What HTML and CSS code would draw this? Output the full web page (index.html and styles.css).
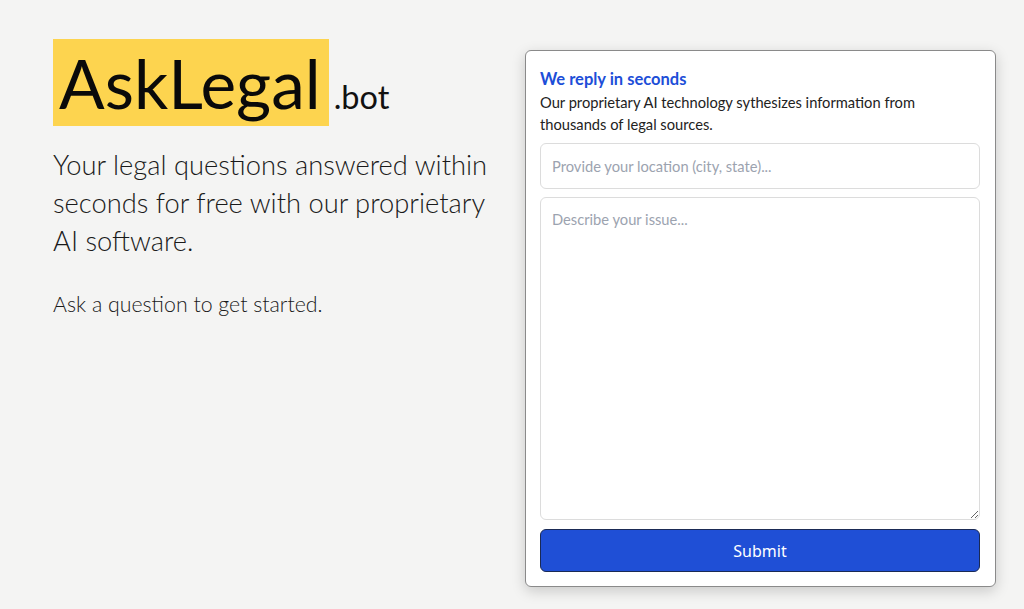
FILE: index.html
```html
<!DOCTYPE html>
<html lang="en">
<head>
<meta charset="utf-8">
<title>AskLegal.bot</title>
<link rel="stylesheet" href="styles.css">
</head>
<body>
<main class="page">
  <section class="intro">
    <div class="brand">
      <span class="brand-box">AskLegal</span><span class="brand-tld">.bot</span>
    </div>
    <p class="headline">Your legal questions answered within seconds for free with our proprietary AI software.</p>
    <p class="cta">Ask a question to get started.</p>
  </section>
  <form class="card">
    <h2 class="card-title">We reply in seconds</h2>
    <p class="card-desc">Our proprietary AI technology sythesizes information from thousands of legal sources.</p>
    <input class="field" type="text" placeholder="Provide your location (city, state)...">
    <textarea class="field area" placeholder="Describe your issue..."></textarea>
    <button class="submit" type="button">Submit</button>
  </form>
</main>
</body>
</html>
```

FILE: styles.css
```css
html, body {
  margin: 0;
  padding: 0;
  background: #f4f4f3;
  font-family: Lato, "Liberation Sans", sans-serif;
  color: #111;
}
.page {
  display: flex;
  align-items: flex-start;
  padding: 39px 28px 0 53px;
  height: 609px;
  box-sizing: border-box;
}
.intro {
  width: 450px;
}
.brand {
  display: flex;
  align-items: baseline;
}
.brand-box {
  background: #fdd44f;
  font-size: 67.5px;
  line-height: 87px;
  padding: 0 8px 0 6px;
  color: #0a0a0a;
}
.brand-tld {
  font-size: 32.5px;
  margin-left: 5px;
  color: #111;
}
.headline {
  margin: 20px 0 0;
  font-size: 27.3px;
  line-height: 38px;
  font-weight: 300;
  color: #1a1a1a;
}
.cta {
  margin: 30px 0 0;
  font-size: 21.3px;
  line-height: 28px;
  font-weight: 300;
  color: #1a1a1a;
}
.card {
  margin-left: auto;
  margin-top: 11px;
  width: 471px;
  height: 537px;
  box-sizing: border-box;
  background: #fff;
  border: 1px solid #8a8a8a;
  border-radius: 6px;
  box-shadow: 0 4px 14px rgba(0,0,0,0.18);
  padding: 18px 15px 14px 14px;
  display: flex;
  flex-direction: column;
}
.card-title {
  margin: 0;
  font-size: 16.5px;
  line-height: 20px;
  font-weight: 700;
  color: #1d4ed8;
}
.card-desc {
  margin: 2px 0 0;
  font-size: 14.7px;
  line-height: 22px;
  color: #222;
}
.field {
  margin-top: 8px;
  width: 100%;
  box-sizing: border-box;
  height: 46px;
  border: 1px solid #dcdcdc;
  border-radius: 6px;
  padding: 0 11px;
  font-family: Lato, "Liberation Sans", sans-serif;
  font-size: 14.7px;
  color: #222;
  background: #fff;
  outline: none;
}
.field::placeholder {
  color: #9ca3af;
}
.area {
  margin-top: 8px;
  height: 324px;
  padding: 12px 11px;
  resize: vertical;
}
.submit {
  margin-top: 9px;
  height: 43px;
  width: 100%;
  border: 1px solid #1a2a55;
  border-radius: 6px;
  background: #1f4fd6;
  color: #fff;
  font-family: "Noto Sans", "Open Sans", sans-serif;
  font-size: 16px;
}
```
